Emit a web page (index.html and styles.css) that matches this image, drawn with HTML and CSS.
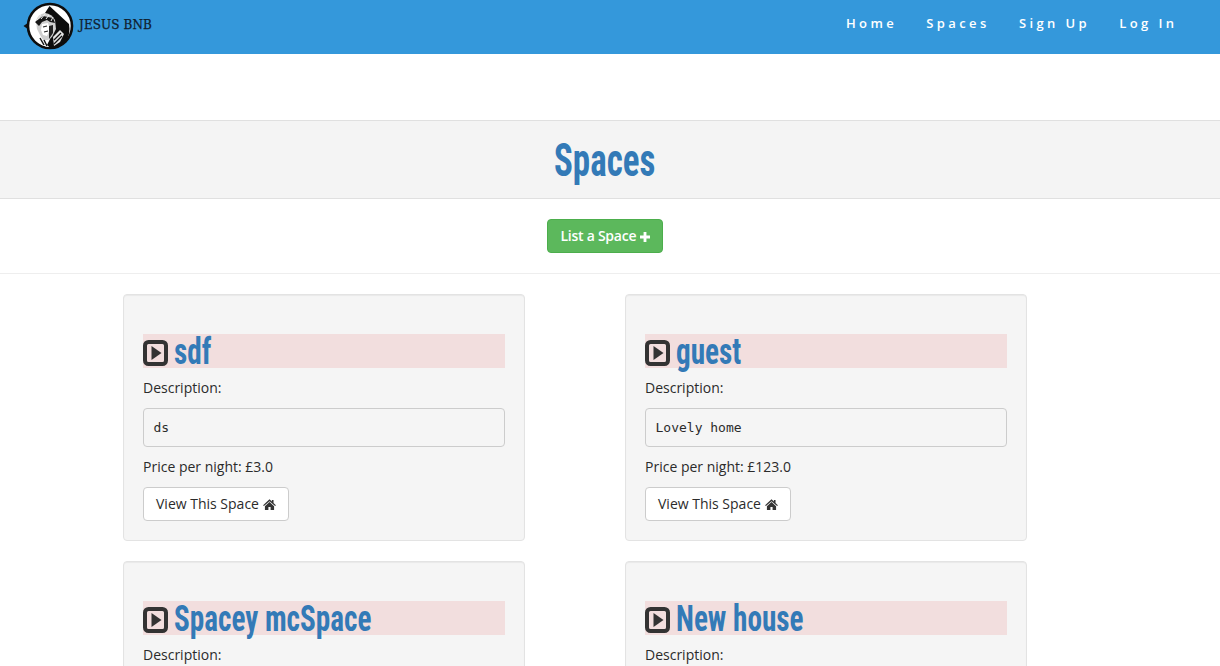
FILE: index.html
```html
<!DOCTYPE html>
<html lang="en">
<head>
<meta charset="utf-8">
<title>Jesus BNB</title>
<link rel="stylesheet" href="styles.css">
</head>
<body>
<header class="navbar">
  <a class="brand" href="#">
    <svg class="logo" viewBox="0 0 54 54" width="54" height="54" aria-hidden="true">
      <path d="M0.5 27 L4 24.5 L4 29.5 Z" fill="#111"/>
      <circle cx="27" cy="27" r="22" fill="#fff" stroke="#0d0d0d" stroke-width="2.6"/>
      <path d="M26.5 7 L46 25 Q48 36 42 43 Q36 49 28 50 L24 46 L30 34 L31 22 L22 14 Z" fill="#0d0d0d"/>
      <path d="M13 22 Q15 15 22 14 Q29 15 32 21 L33 30 L29 38 L25 41 L20 41 L17 36 L14 30 Z" fill="#cfcfcf"/>
      <path d="M12 23 L20 17 L30 19 L32 24 L27 23 L24 21 L19 23 L16 27 Z" fill="#161616"/>
      <path d="M14 21 L18 16 M18 20 L22 15 M23 20 L26 16 M28 22 L30 18" stroke="#eee" stroke-width="1" fill="none"/>
      <path d="M19 25 L25 24 L27 30 L24 37 L20 36 L18 31 Z" fill="#fff"/>
      <path d="M20 28 L24 27 M21 33 L25 32" stroke="#222" stroke-width="1.1" fill="none"/>
      <path d="M26 27 L30 26 L30 34 L26 40 Z" fill="#222"/>
      <path d="M14 33 L18 38 L22 44 L26 48 Q18 47 14 42 Z" fill="#fff"/>
      <path d="M17 39 L21 46 M21 41 L24 47" stroke="#161616" stroke-width="1.5" fill="none"/>
      <path d="M30 38 L37 31 L41 35 L37 43 L31 47 Z" fill="#e4e4e4"/>
      <path d="M31 41 L38 34 M31 45 L39 37" stroke="#111" stroke-width="1.3" fill="none"/>
    </svg>
    <span class="brand-name">JESUS BNB</span>
  </a>
  <nav class="nav">
    <a href="#">Home</a>
    <a href="#">Spaces</a>
    <a href="#">Sign Up</a>
    <a href="#">Log In</a>
  </nav>
</header>

<section class="title-band">
  <h1><span class="narrow-center">Spaces</span></h1>
</section>

<section class="action-band">
  <a class="btn btn-success" href="#">List a Space
    <svg class="icon-plus" viewBox="0 0 12 12" width="10" height="10" aria-hidden="true"><path d="M4.3 0h3.4v4.3h4.3v3.4h-4.3v4.3h-3.4v-4.3h-4.3v-3.4h4.3z" fill="#fff"/></svg>
  </a>
</section>

<main class="cards">
  <article class="well">
    <h3><svg class="icon-expand" viewBox="0 0 25 26" width="25" height="26" aria-hidden="true"><rect x="2" y="2" width="21" height="22" rx="3.5" fill="none" stroke="#333" stroke-width="4"/><path d="M8.5 6 L18.5 13 L8.5 20 Z" fill="#333"/></svg><a class="narrow" href="#">sdf</a></h3>
    <p>Description:</p>
    <pre>ds</pre>
    <p>Price per night: £3.0</p>
    <a class="btn btn-default" href="#">View This Space
      <svg class="icon-home" viewBox="0 0 14 12" width="13" height="11" aria-hidden="true"><path d="M7 0.4 L9.6 2.7 V1.2 H11.4 V4.3 L14 6.7 L13.1 7.7 L7 2.4 L0.9 7.7 L0 6.7 Z M2 7.8 L7 3.4 L12 7.8 V12 H8.2 V8.8 H5.8 V12 H2 Z" fill="#333"/></svg>
    </a>
  </article>
  <article class="well">
    <h3><svg class="icon-expand" viewBox="0 0 25 26" width="25" height="26" aria-hidden="true"><rect x="2" y="2" width="21" height="22" rx="3.5" fill="none" stroke="#333" stroke-width="4"/><path d="M8.5 6 L18.5 13 L8.5 20 Z" fill="#333"/></svg><a class="narrow" href="#">guest</a></h3>
    <p>Description:</p>
    <pre>Lovely home</pre>
    <p>Price per night: £123.0</p>
    <a class="btn btn-default" href="#">View This Space
      <svg class="icon-home" viewBox="0 0 14 12" width="13" height="11" aria-hidden="true"><path d="M7 0.4 L9.6 2.7 V1.2 H11.4 V4.3 L14 6.7 L13.1 7.7 L7 2.4 L0.9 7.7 L0 6.7 Z M2 7.8 L7 3.4 L12 7.8 V12 H8.2 V8.8 H5.8 V12 H2 Z" fill="#333"/></svg>
    </a>
  </article>
  <article class="well">
    <h3><svg class="icon-expand" viewBox="0 0 25 26" width="25" height="26" aria-hidden="true"><rect x="2" y="2" width="21" height="22" rx="3.5" fill="none" stroke="#333" stroke-width="4"/><path d="M8.5 6 L18.5 13 L8.5 20 Z" fill="#333"/></svg><a class="narrow" href="#">Spacey mcSpace</a></h3>
    <p>Description:</p>
  </article>
  <article class="well">
    <h3><svg class="icon-expand" viewBox="0 0 25 26" width="25" height="26" aria-hidden="true"><rect x="2" y="2" width="21" height="22" rx="3.5" fill="none" stroke="#333" stroke-width="4"/><path d="M8.5 6 L18.5 13 L8.5 20 Z" fill="#333"/></svg><a class="narrow" href="#">New house</a></h3>
    <p>Description:</p>
  </article>
</main>
</body>
</html>
```
FILE: styles.css
```css
* { box-sizing: border-box; }
html { overflow: hidden; }
body {
  margin: 0;
  font-family: "Open Sans", "Noto Sans", sans-serif;
  font-size: 14px;
  line-height: 20px;
  color: #2b2b2b;
  background: #fff;
}
a { text-decoration: none; color: inherit; }

.navbar {
  height: 54px;
  background: #3498db;
  display: flex;
  justify-content: space-between;
  align-items: flex-start;
}
.brand { display: flex; align-items: center; height: 52px; padding-left: 23px; }
.logo { display: block; margin-right: 2px; }
.brand-name {
  font-family: "DejaVu Serif", "Liberation Serif", serif;
  font-size: 12px;
  letter-spacing: 0.1px;
  line-height: 20px;
  margin-top: -3px;
  color: #10202e;
  -webkit-text-stroke: 0.25px #10202e;
}
.nav { display: flex; gap: 29.2px; padding: 13px 42.5px 0 0; }
.nav a {
  color: #fff;
  font-size: 13px;
  font-weight: 600;
  letter-spacing: 3.4px;
}

.title-band {
  margin-top: 66px;
  height: 79px;
  background: #f4f4f4;
  border-top: 1px solid #e0e0e0;
  border-bottom: 1px solid #e0e0e0;
  display: flex;
  justify-content: center;
  align-items: center;
  padding-right: 10px;
}
h1, h3 {
  font-family: "Roboto Condensed", "Liberation Sans Narrow", "Liberation Sans", sans-serif;
  color: #337ab7;
  font-weight: 700;
  margin: 0;
}
h1 { font-size: 46px; line-height: 44px; }
.narrow-center { display: inline-block; transform: scaleX(0.76); }
.narrow { display: inline-block; transform: translateY(1px) scaleX(0.8); transform-origin: left center; }

.action-band {
  height: 75px;
  border-bottom: 1px solid #eee;
  display: flex;
  justify-content: center;
  align-items: center;
  padding-right: 10px;
}
.btn {
  display: inline-block;
  height: 34px;
  padding: 6px 12px;
  border: 1px solid transparent;
  border-radius: 4px;
  font-size: 14px;
  line-height: 20px;
  white-space: nowrap;
}
.btn-success { background: #5cb85c; border-color: #4cae4c; color: #fff; font-weight: 600; letter-spacing: -0.25px; }
.btn-default { background: #fff; border-color: #ccc; color: #2b2b2b; }
.icon-plus { vertical-align: -1px; }
.icon-home { vertical-align: -1px; }

.cards {
  display: grid;
  grid-template-columns: 402px 402px;
  column-gap: 100px;
  row-gap: 20px;
  padding: 20px 0 0 123px;
}
.well {
  min-height: 20px;
  padding: 19px;
  background: #f5f5f5;
  border: 1px solid #e3e3e3;
  border-radius: 4px;
  box-shadow: inset 0 1px 1px rgba(0, 0, 0, 0.05);
}
h3 {
  margin-top: 20px;
  margin-bottom: 10px;
  height: 34px;
  background: #f2dede;
  font-size: 36.5px;
  line-height: 36px;
  white-space: nowrap;
  display: flex;
  align-items: center;
  gap: 6px;
}
.icon-expand { flex: none; display: block; margin-top: 4px; }
.well p { margin: 0 0 10px; }
pre {
  display: block;
  margin: 0 0 10px;
  padding: 9.5px;
  height: 39px;
  font-family: "DejaVu Sans Mono", "Liberation Mono", monospace;
  font-size: 13px;
  line-height: 18px;
  color: #2b2b2b;
  background: #f5f5f5;
  border: 1px solid #ccc;
  border-radius: 4px;
}
```
